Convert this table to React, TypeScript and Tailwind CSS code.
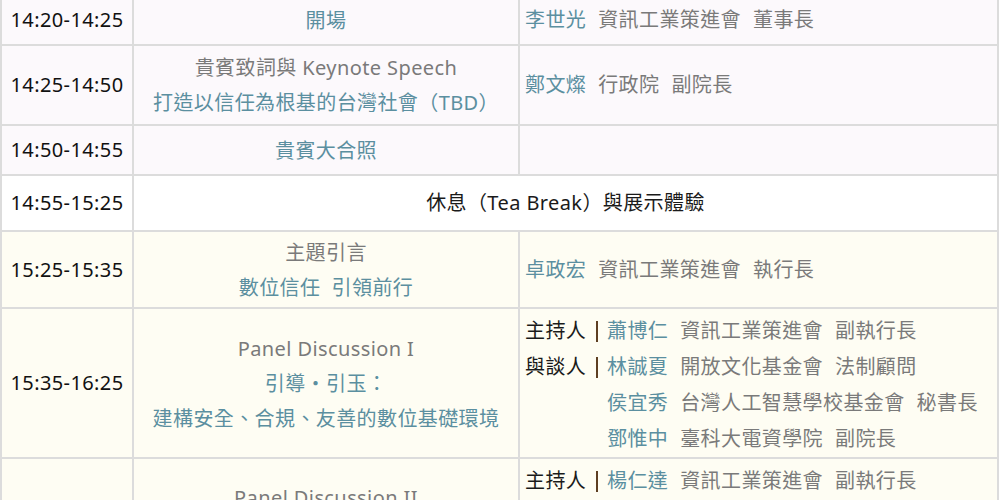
import type { ReactNode } from "react";

const teal = "text-[#5b8fa0]";
const gray = "text-[#7a7a7a]";

type Person = { name: string; org: string; title: string };

function PersonLine({ p }: { p: Person }) {
  return (
    <div className="flex">
      <span className={`${teal} mr-[12px]`}>{p.name}</span>
      <span className={`${gray} mr-[12px]`}>{p.org}</span>
      <span className={gray}>{p.title}</span>
    </div>
  );
}

function RoleLine({ role, p }: { role?: string; p: Person }) {
  return (
    <div className="flex items-center">
      <div className="flex w-[82px] shrink-0 items-center">
        {role ? (
          <>
            <span className="text-[#1a1a1a]">{role}</span>
            <span className="ml-[10px] h-[21px] w-[2px] bg-[#5e3f22]" />
          </>
        ) : null}
      </div>
      <PersonLine p={p} />
    </div>
  );
}

function TimeCell({ time, bg }: { time: string; bg: string }) {
  return (
    <div className={`flex items-center justify-center text-[#111] ${bg}`}>{time}</div>
  );
}

function Mid({ bg, children }: { bg: string; children: ReactNode }) {
  return (
    <div className={`flex flex-col items-center justify-center text-center leading-[35px] ${bg}`}>
      {children}
    </div>
  );
}

export default function App() {
  const pink = "bg-[#fcf9fc]";
  const cream = "bg-[#fefdf3]";

  return (
    <div className="h-[500px] overflow-hidden bg-white font-['Noto_Sans','Noto_Sans_CJK_TC',sans-serif] text-[20px] tracking-[0.4px]">
      <div className="-mt-[6px] grid w-[999px] grid-cols-[130px_384px_477px] grid-rows-[48px_78px_48px_54px_75px_148px_190px] gap-[2px] bg-[#dcdcdc] p-[2px]">
        {/* 開場 */}
        <TimeCell time="14:20-14:25" bg={pink} />
        <Mid bg={pink}>
          <div className={teal}>開場</div>
        </Mid>
        <div className={`flex items-center pl-[5px] ${pink}`}>
          <PersonLine p={{ name: "李世光", org: "資訊工業策進會", title: "董事長" }} />
        </div>

        {/* Keynote */}
        <TimeCell time="14:25-14:50" bg={pink} />
        <Mid bg={pink}>
          <div className={gray}>貴賓致詞與 Keynote Speech</div>
          <div className={teal}>打造以信任為根基的台灣社會（TBD）</div>
        </Mid>
        <div className={`flex items-center pl-[5px] ${pink}`}>
          <PersonLine p={{ name: "鄭文燦", org: "行政院", title: "副院長" }} />
        </div>

        {/* 合照 */}
        <TimeCell time="14:50-14:55" bg={pink} />
        <Mid bg={pink}>
          <div className={teal}>貴賓大合照</div>
        </Mid>
        <div className={pink} />

        {/* break */}
        <TimeCell time="14:55-15:25" bg="bg-white" />
        <div className="col-span-2 flex items-center justify-center bg-white text-[#1a1a1a]">
          休息（Tea Break）與展示體驗
        </div>

        {/* 主題引言 */}
        <TimeCell time="15:25-15:35" bg={cream} />
        <Mid bg={cream}>
          <div className={gray}>主題引言</div>
          <div className={teal}>數位信任&nbsp;&nbsp;引領前行</div>
        </Mid>
        <div className={`flex items-center pl-[5px] ${cream}`}>
          <PersonLine p={{ name: "卓政宏", org: "資訊工業策進會", title: "執行長" }} />
        </div>

        {/* Panel I */}
        <TimeCell time="15:35-16:25" bg={cream} />
        <Mid bg={cream}>
          <div className={gray}>Panel Discussion I</div>
          <div className={teal}>引導・引玉：</div>
          <div className={teal}>建構安全、合規、友善的數位基礎環境</div>
        </Mid>
        <div className={`flex flex-col pl-[5px] pt-[4px] leading-[36px] ${cream}`}>
          <RoleLine role="主持人" p={{ name: "蕭博仁", org: "資訊工業策進會", title: "副執行長" }} />
          <RoleLine role="與談人" p={{ name: "林誠夏", org: "開放文化基金會", title: "法制顧問" }} />
          <RoleLine p={{ name: "侯宜秀", org: "台灣人工智慧學校基金會", title: "秘書長" }} />
          <RoleLine p={{ name: "鄧惟中", org: "臺科大電資學院", title: "副院長" }} />
        </div>

        {/* Panel II */}
        <TimeCell time="16:25-17:15" bg={cream} />
        <div className={`flex flex-col items-center pt-[21px] text-center leading-[35px] ${cream}`}>
          <div className={gray}>Panel Discussion II</div>
        </div>
        <div className={`flex flex-col pl-[5px] pt-[4px] leading-[36px] ${cream}`}>
          <RoleLine role="主持人" p={{ name: "楊仁達", org: "資訊工業策進會", title: "副執行長" }} />
        </div>
      </div>
    </div>
  );
}
